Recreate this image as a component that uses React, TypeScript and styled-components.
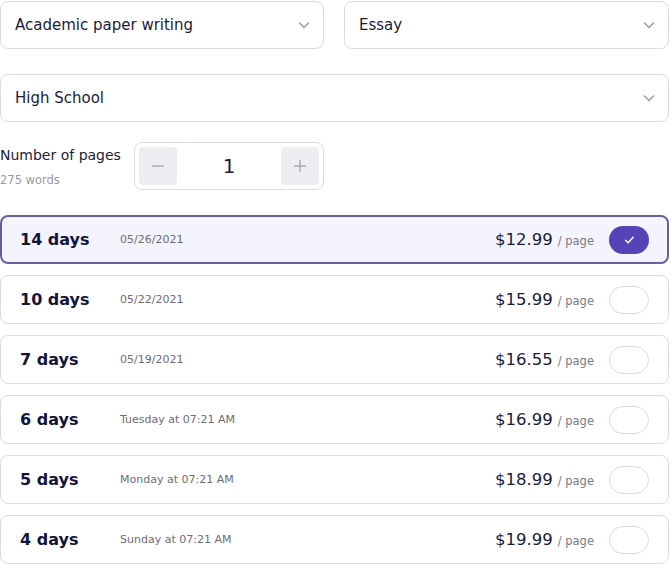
import styled, { createGlobalStyle, css } from 'styled-components';

const Global = createGlobalStyle`
  body {
    margin: 0;
    background: #fff;
    font-family: 'DejaVu Sans', sans-serif;
    color: #1b1b3a;
  }
`;

const Page = styled.div`
  width: 669px;
  padding-top: 1px;
  display: flex;
  flex-direction: column;
`;

const SelectRow = styled.div`
  display: grid;
  grid-template-columns: 324px 325px;
  column-gap: 20px;
  margin-bottom: 25px;
`;

const Select = styled.div`
  height: 48px;
  box-sizing: border-box;
  border: 1px solid #dcdce0;
  border-radius: 8px;
  display: flex;
  align-items: center;
  justify-content: space-between;
  padding: 0 12px 0 14px;
  font-size: 15px;
  color: #1b1b3a;
`;

const Chevron = () => (
  <svg width='14' height='14' viewBox='0 0 14 14'>
    <path d='M2 4.5l5 5 5-5' fill='none' stroke='#9a9aa2' strokeWidth='1.4' />
  </svg>
);

const PagesRow = styled.div`
  display: flex;
  align-items: center;
  gap: 10px;
  margin-top: 20px;
  margin-bottom: 25px;
`;

const PagesLabel = styled.div`
  width: 124px;
  display: flex;
  flex-direction: column;
  gap: 10px;
  padding-top: 2px;
  font-size: 14px;
  color: #1b1b3a;
  small {
    font-size: 11.5px;
    color: #9a9aa2;
  }
`;

const Stepper = styled.div`
  width: 190px;
  height: 48px;
  box-sizing: border-box;
  border: 1px solid #dcdce0;
  border-radius: 8px;
  display: flex;
  align-items: center;
  justify-content: space-between;
  padding: 0 4px;
  font-size: 20px;
`;

const StepButton = styled.div`
  width: 38px;
  height: 38px;
  border-radius: 4px;
  background: #eeeef2;
  display: flex;
  align-items: center;
  justify-content: center;
`;

const List = styled.div`
  display: flex;
  flex-direction: column;
  gap: 11px;
`;

const Option = styled.div<{ $active?: boolean }>`
  height: 49px;
  box-sizing: border-box;
  border: 1px solid #dcdce0;
  border-radius: 8px;
  display: flex;
  align-items: center;
  padding: 0 19px;
  ${(p) =>
    p.$active &&
    css`
      border: 2px solid #6a5f9e;
      background: #f4f4fc;
      padding: 0 18px;
    `}
`;

const Days = styled.div`
  width: 100px;
  font-size: 16px;
  font-weight: 600;
  color: #14143a;
`;

const DateText = styled.div`
  flex: 1;
  font-size: 11px;
  color: #6c6c76;
`;

const Price = styled.div`
  font-size: 16.5px;
  color: #1b1b3a;
  span {
    font-size: 11.5px;
    color: #7a7a84;
    margin-left: 5px;
  }
`;

const Toggle = styled.div<{ $on?: boolean }>`
  width: 40px;
  height: 28px;
  box-sizing: border-box;
  margin-left: 15px;
  border-radius: 14px;
  border: 1px solid #dcdce0;
  display: flex;
  align-items: center;
  justify-content: center;
  ${(p) =>
    p.$on &&
    css`
      border: none;
      background: #5444b8;
    `}
`;

const options = [
  { days: '14 days', date: '05/26/2021', price: '$12.99', on: true },
  { days: '10 days', date: '05/22/2021', price: '$15.99' },
  { days: '7 days', date: '05/19/2021', price: '$16.55' },
  { days: '6 days', date: 'Tuesday at 07:21 AM', price: '$16.99' },
  { days: '5 days', date: 'Monday at 07:21 AM', price: '$18.99' },
  { days: '4 days', date: 'Sunday at 07:21 AM', price: '$19.99' },
];

export default function App() {
  return (
    <>
      <Global />
      <Page>
        <SelectRow>
          <Select>
            Academic paper writing
            <Chevron />
          </Select>
          <Select>
            Essay
            <Chevron />
          </Select>
        </SelectRow>
        <Select>
          High School
          <Chevron />
        </Select>
        <PagesRow>
          <PagesLabel>
            Number of pages
            <small>275 words</small>
          </PagesLabel>
          <Stepper>
            <StepButton>
              <svg width='14' height='14' viewBox='0 0 14 14'>
                <path d='M1 7h12' stroke='#a8a8b0' strokeWidth='1.4' />
              </svg>
            </StepButton>
            1
            <StepButton>
              <svg width='14' height='14' viewBox='0 0 14 14'>
                <path d='M1 7h12M7 1v12' stroke='#a8a8b0' strokeWidth='1.4' />
              </svg>
            </StepButton>
          </Stepper>
        </PagesRow>
        <List>
          {options.map((o) => (
            <Option key={o.days} $active={o.on}>
              <Days>{o.days}</Days>
              <DateText>{o.date}</DateText>
              <Price>
                {o.price}
                <span>/ page</span>
              </Price>
              <Toggle $on={o.on}>
                {o.on && (
                  <svg width='13' height='13' viewBox='0 0 14 14'>
                    <path d='M2.5 7.5l3 3 6-6.5' fill='none' stroke='#fff' strokeWidth='1.6' />
                  </svg>
                )}
              </Toggle>
            </Option>
          ))}
        </List>
      </Page>
    </>
  );
}
